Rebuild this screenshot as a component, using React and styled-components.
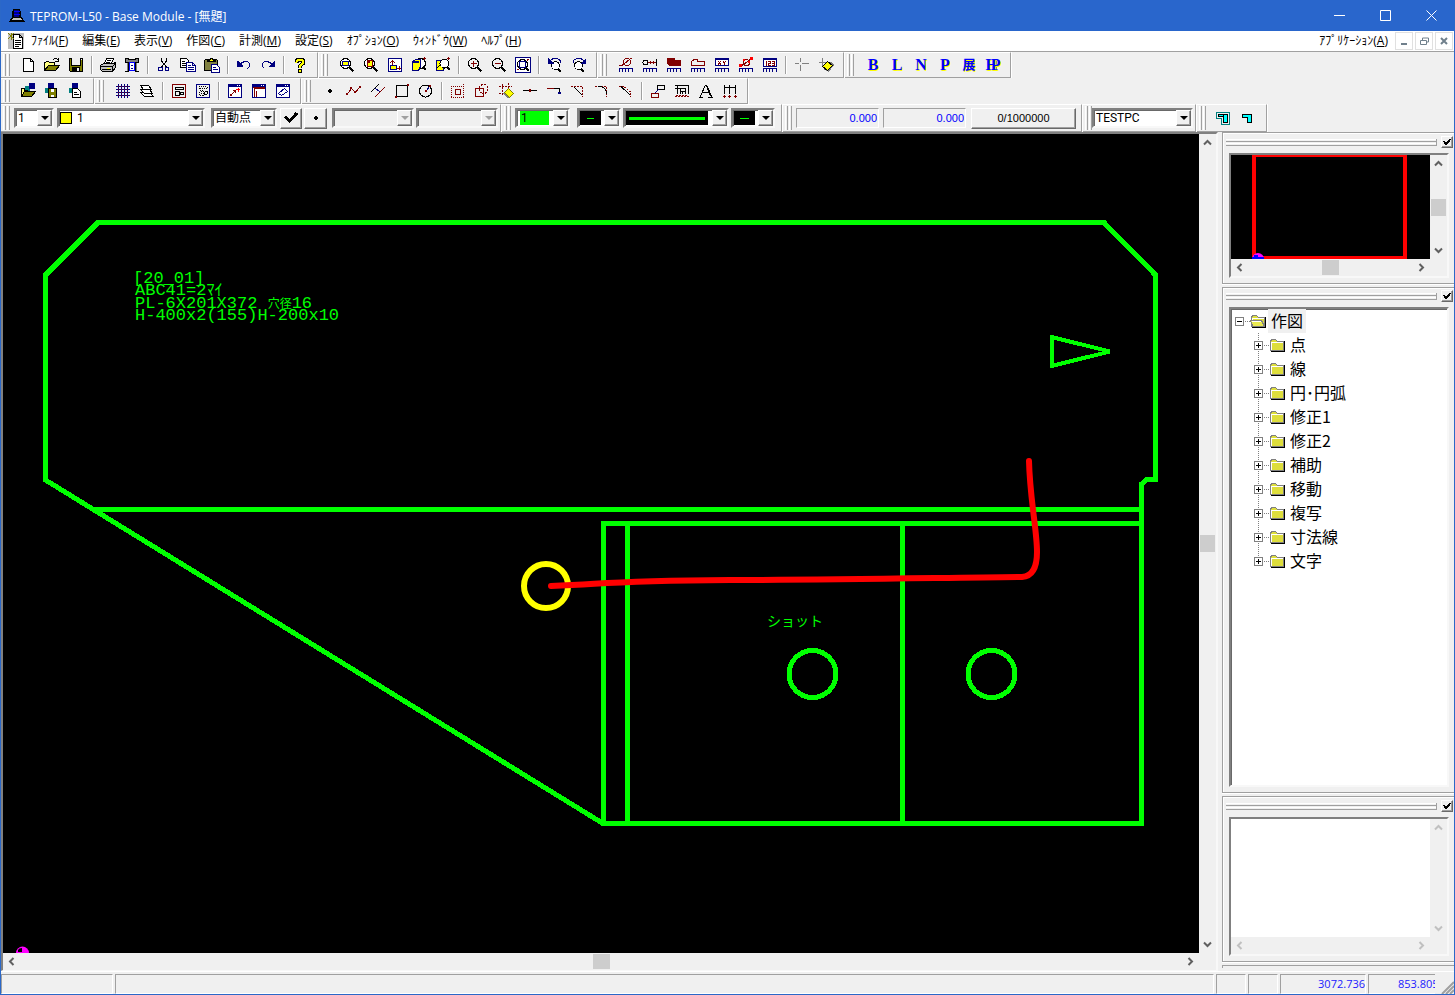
import React from "react";
import styled, {createGlobalStyle, css} from "styled-components";

const NAVY = "#000080";
const MAROON = "#800000";
const OLIVE = "#808000";
const TEAL = "#008080";
const YELLOW = "#ffff00";
const LIME = "#00ff00";

const GlobalStyle = createGlobalStyle`
  *, *::before, *::after {
    box-sizing: border-box;
  }
  body {
    margin: 0;
    background: #f0f0f0;
    font-family: "Open Sans", "Noto Sans CJK JP", sans-serif;
    font-size: 12px;
    color: #000;
  }
  button, select, input, textarea {
    font: inherit;
    color: inherit;
    margin: 0;
    padding: 0;
    border: 0;
    border-radius: 0;
    background: none;
  }
  ul {
    margin: 0;
    padding: 0;
    list-style: none;
  }
  svg {
    display: block;
  }
`;

const sunken = css`
  border: 2px solid;
  border-color: #808080 #f8f8f8 #f8f8f8 #808080;
  box-shadow: inset 1px 1px 0 #696969;
`;
const raised = css`
  border: 1px solid;
  border-color: #fff #696969 #696969 #fff;
  box-shadow: inset -1px -1px 0 #a0a0a0;
  background: #f0f0f0;
`;

/* ---------- icons ---------- */

const L = ({c = "#000", d, f = "none", w = 1, ...rest}) => (
  <path d={d} stroke={c} fill={f} strokeWidth={w} {...rest} />
);
const F = ({c = "#000", d}) => <path d={d} fill={c} />;

const Lens = ({c = "#f0f0f0"}) => (
  <>
    <circle cx="6.5" cy="6.5" r="5" stroke="#000" fill={c} />
    <L d="M10.5 10.5L14.5 14.5" w={2} />
  </>
);
const Comb = () => <L c={NAVY} d="M1.5 15V11.5H14.5V15M4.5 11V15M7.5 11V15M10.5 11V15" />;
const WindowBox = ({c = NAVY}) => (
  <>
    <L c={c} f="#fff" d="M1.5 1.5H14.5V14.5H1.5Z" />
    <F c={NAVY} d="M1 1H15V4H1Z" />
    <F c="#fff" d="M10 2H11V3H10ZM12 2H13V3H12Z" />
  </>
);

const icons = {
  new: (
    <L f="#fff" d="M3.5 1.5H10.5L13.5 4.5V14.5H3.5ZM10.5 1.5V4.5H13.5" />
  ),
  open: (
    <>
      <L f="#ffff80" d="M0.5 13.5V5.5H1.5L2.5 4.5H4.5L5.5 5.5H10.5V8" />
      <L f={OLIVE} d="M0.5 13.5L4.5 8.5H15.5L11.5 13.5Z" />
      <L d="M8.5 3.5Q9.5 1.5 11.5 1.5T14.5 4M14.5 1V4.5H11" />
    </>
  ),
  save: (
    <>
      <L f={OLIVE} d="M1.5 1.5H14.5V14.5H2.5L1.5 13.5Z" />
      <F c="#f0f0f0" d="M4 1H12V8H4Z" />
      <L d="M3.5 1V8.5H12.5V1" />
      <F d="M4 10H12V15H4Z" />
      <F c="#f0f0f0" d="M9 11H11V14H9ZM13 2H14V3H13Z" />
    </>
  ),
  print: (
    <>
      <L f="#fff" d="M4.5 6.5L6.5 1.5H13.5L11.5 6.5M6.5 3.5H11M6 5.5H10" />
      <L f="#c0c0c0" d="M0.5 8.5L3.5 6.5H13.5L15.5 5.5V10.5L12.5 14.5H2.5L0.5 12.5ZM0.5 9.5H12.5V14.5M12.5 9.5L15.5 6.5" />
      <F c={YELLOW} d="M7 11H10V12H7Z" />
      <L d="M2 12.5H11" />
    </>
  ),
  plot: (
    <>
      <F d="M1 1H5V2H11V1H15V6H12V14H15V15H11V13H5V15H1V14H4V6H1Z" />
      <F c="#808080" d="M2 2H4V3H12V2H14V5H2ZM3 6H4V14H3ZM12 6H13V14H12Z" />
      <L c="#0000ff" f="#fff" d="M5.5 5.5H10.5V13.5H5.5Z" />
      <L c={NAVY} d="M7 8.5H9M7 11.5H9" />
    </>
  ),
  cut: (
    <>
      <L d="M5.5 1V4L10.5 10M10.5 1V4L5.5 10" />
      <circle cx="4.5" cy="12" r="2" stroke={NAVY} fill="none" />
      <circle cx="11" cy="12" r="2" stroke={NAVY} fill="none" />
    </>
  ),
  copy: (
    <>
      <L f="#fff" d="M0.5 1.5H6.5L8.5 3.5V10.5H0.5ZM2 4.5H5M2 6.5H6M2 8.5H6" />
      <L c={NAVY} f="#fff" d="M6.5 5.5H12.5L15.5 8.5V14.5H6.5ZM12.5 5.5V8.5H15.5M8 8.5H11M8 10.5H14M8 12.5H14" />
    </>
  ),
  paste: (
    <>
      <L f="#808040" d="M0.5 3.5L1.5 2.5H12.5L13.5 3.5V13.5H0.5Z" />
      <L f={YELLOW} d="M3.5 4.5V3.5H5.5L6.5 1.5H8.5L9.5 3.5H11.5V4.5Z" />
      <L c={NAVY} f="#fff" d="M7.5 7.5H12.5L15.5 10.5V15.5H7.5ZM9 10.5H12M9 12.5H14" />
    </>
  ),
  undo: (
    <>
      <L c={NAVY} d="M3.5 7.5L6 5.5Q8 4.5 11 4.5Q13.5 5.5 13.5 8Q13.5 10 11.5 11.5" />
      <F c={NAVY} d="M1 4H2L7 9V10H1Z" />
    </>
  ),
  redo: (
    <>
      <L c={NAVY} d="M12.5 7.5L10 5.5Q8 4.5 5 4.5Q2.5 5.5 2.5 8Q2.5 10 4.5 11.5" />
      <F c={NAVY} d="M15 4H14L9 9V10H15Z" />
    </>
  ),
  help: (
    <>
      <L w={4} d="M4.5 6V5Q4.5 2.5 8 2.5T11.500 5Q11.500 6.5 9.5 7.5L8 9V11" />
      <L w={2} c={YELLOW} d="M4.5 5.500Q4.5 2.5 8 2.5T11.500 5Q11.500 6.5 9.5 7.5L8 9V10.5" />
      <L f={YELLOW} d="M6.5 12.5H9.5V15.5H6.5Z" />
    </>
  ),
  zoomRect: (
    <>
      <Lens c="#fff" />
      <L c={NAVY} f={YELLOW} d="M3.5 4.5H9.5V8.5H3.5Z" />
    </>
  ),
  zoomPage: (
    <>
      <Lens c="#fff" />
      <F c={MAROON} d="M4 3H10V10H4Z" />
      <F c={YELLOW} d="M7 4H9V9H5V6H7Z" />
    </>
  ),
  zoomMove: (
    <>
      <L c={NAVY} f="#fff" d="M1.5 1.5H14.5V14.5H1.5Z" />
      <L c={NAVY} f={YELLOW} d="M3.5 8.5H9.5V12.5H3.5Z" />
      <L c={MAROON} d="M5.5 3V8M3 5.5H4M4 4.5H7M7 5.5H8M10 11.5H14M12.5 9V13" />
    </>
  ),
  zoomBlock: (
    <>
      <circle cx="9.5" cy="6.5" r="5" stroke="#000" fill="#fff" />
      <L w={2} d="M12 10L15 13" />
      <L c={NAVY} f={YELLOW} d="M1.5 4.5L4.5 2.5H9.5V9.5L7.5 13.5H1.5Z" />
      <F c={NAVY} d="M1 4H8V6H1Z" />
      <L c={MAROON} d="M12 1.5H15M13.5 0V3" />
    </>
  ),
  zoomPart: (
    <>
      <L c={NAVY} f={YELLOW} d="M1.5 3.5H5.5V8.5H8.5V13.5H1.5Z" />
      <circle cx="9.5" cy="6.5" r="4.5" stroke="#000" fill="#fff" />
      <L w={2} d="M12 10L15 13" />
      <L d="M5 8L2 11" />
      <L c={MAROON} d="M12 1.5H15M13.5 0V3" />
    </>
  ),
  zoomIn: (
    <>
      <Lens />
      <L c={MAROON} d="M3.5 6.5H10M6.5 3.5V10" />
    </>
  ),
  zoomOut: (
    <>
      <Lens />
      <L c={MAROON} d="M3.5 6.5H10" />
    </>
  ),
  zoomAll: (
    <>
      <L c={NAVY} f="#fff" d="M0.5 0.5H15.5V15.5H0.5Z" />
      <circle cx="7.5" cy="7.5" r="5" stroke="#000" fill="#fff" />
      <L w={2} d="M11 11L14 14" />
      <L c={NAVY} d="M4.5 4.5H10.5V10.5H4.5Z" />
      <L c={MAROON} d="M12 2.5H14M12.5 2V4M2 12.5H4" />
    </>
  ),
  zoomPrev: (
    <>
      <circle cx="8.5" cy="8.5" r="4" stroke="#000" fill="#fff" />
      <L w={2} d="M11 12L14 15" />
      <L c={NAVY} d="M3 3.5Q8 -0.5 13.5 3.5V6" />
      <F c={NAVY} d="M1 1V7H7Z" />
    </>
  ),
  zoomNext: (
    <>
      <circle cx="7.5" cy="8.5" r="4" stroke="#000" fill="#fff" />
      <L w={2} d="M10 12L13 15" />
      <L c={NAVY} d="M13 3.5Q8 -0.5 2.5 3.5V6" />
      <F c={NAVY} d="M15 1V7H9Z" />
    </>
  ),
  measRadius: (
    <>
      <Comb />
      <circle cx="9" cy="5" r="3.5" stroke={MAROON} fill="none" />
      <L c={MAROON} d="M1 8.5H4L13.5 1" />
    </>
  ),
  measDist: (
    <>
      <Comb />
      <circle cx="3.5" cy="5.5" r="2.5" stroke="#000" fill="none" />
      <L c={MAROON} d="M6 5.5H14M8.5 4V7M11.5 4V7" />
      <L d="M14.5 2V9" />
    </>
  ),
  measFill: (
    <>
      <Comb />
      <L c={MAROON} f={MAROON} d="M1.5 1.5H8.5V3.5H14.5V8.5H3.5L1.5 6.5Z" />
    </>
  ),
  measShape: (
    <>
      <Comb />
      <L c={MAROON} d="M1.5 4.5L4 2.5H7.5V4.5H14.5V8.5H1.5Z" />
    </>
  ),
  measXY: (
    <>
      <Comb />
      <L c={NAVY} f="#fff" d="M1.5 1.5H14.5V8.5H1.5Z" />
      <F c={NAVY} d="M1 1H15V3H1Z" />
      <L c={MAROON} d="M4 4L7 7.5M7 4L4 7.5M9 4L10.5 6L12 4M10.5 6V8" />
    </>
  ),
  measPick: (
    <>
      <Comb />
      <circle cx="8.5" cy="5.5" r="3" stroke={MAROON} fill="none" />
      <L c={MAROON} d="M1 8.5H4L13.5 1.5" />
      <F c="#ff0000" d="M1 7H4V10H1ZM5 2H7V4H5ZM12 0H15V3H12ZM10 4H12V6H10Z" />
    </>
  ),
  measNum: (
    <>
      <Comb />
      <L c={NAVY} f="#fff" d="M1.5 1.5H14.5V9.5H1.5Z" />
      <F c={NAVY} d="M1 1H15V3H1Z" />
      <L c={MAROON} d="M4.5 4V9M6 4.5H8.5V6.5H6.5V8.5H9M10 4.5H12.5V8.5H10M10 6.5H12" />
    </>
  ),
  cross: <L c="#808080" d="M1 6.5H5M8 6.5H15M6.5 1V5M6.5 8V14" />,
  erasePoint: (
    <>
      <L c="#808080" d="M1 5.5H9M4.5 1V9" />
      <F c="#808080" d="M5 12L11 15L16 8L13 5Z" />
      <L f={YELLOW} d="M4.5 9.5L9.5 4.5L14.5 8.5L9.5 13.5Z" />
    </>
  ),
  layOpen: (
    <>
      <F c={TEAL} d="M5 3H10V8H5Z" />
      <F c={NAVY} d="M9 0H15V6H9Z" />
      <L f="#ffff80" d="M1.5 13.5V5.5H4.5V7.5H8" />
      <L f={OLIVE} d="M1.5 13.5L4.5 8.5H15.5L11.5 13.5Z" />
    </>
  ),
  laySave: (
    <>
      <F c={TEAL} d="M1 5H6V10H1Z" />
      <F c={NAVY} d="M4 0H10V6H4Z" />
      <L f={OLIVE} d="M4.5 5.5H12.5V14.5H4.5Z" />
      <F c="#fff" d="M7 6H10V9H7ZM7 12H10V14H7Z" />
    </>
  ),
  layPage: (
    <>
      <F c={TEAL} d="M1 5H6V10H1Z" />
      <F c={NAVY} d="M4 0H10V6H4Z" />
      <L f="#fff" d="M4.5 5.5H9.5L12.5 8.5V14.5H4.5ZM6 9.5H9M6 11.5H11" />
    </>
  ),
  grid: (
    <>
      <L c={NAVY} d="M1 3.5H15M1 6.5H15M1 9.5H15M1 12.5H15M3.5 1V15M6.5 1V15M9.5 1V15M12.5 1V15" />
      <L c={MAROON} strokeDasharray="1 2" d="M3 3.5H15M3 6.5H15M3 9.5H15M3 12.5H15" />
    </>
  ),
  layers: (
    <>
      <L f="#fff" d="M5.5 9.5H10.5L14.5 13.5H5.5L1.5 9.5Z" />
      <L f="#fff" d="M5.5 6.5H10.5L13.5 10.5H5.5L1.500 6.5Z" />
      <L f="#fff" d="M1.5 2.5H9.5L12.5 6.5H4.5Z" />
    </>
  ),
  blockMaroon: (
    <>
      <L c={MAROON} d="M1.5 1.5H14.5V14.5H1.5Z" />
      <L d="M4 4.5H12V6.5H4ZM4.5 8.5H8.5V12.5H4.5Z" />
      <circle cx="11" cy="10.5" r="1.5" stroke="#000" fill="none" />
    </>
  ),
  blockNavy: (
    <>
      <L c={NAVY} d="M1.5 1.5H14.5V14.5H1.5Z" />
      <L strokeDasharray="1 1" d="M4 3.5H12V5.5H4ZM4.5 7.5H8.5V12.5H4.5ZM6.5 8V12" />
      <circle cx="11" cy="10" r="1.5" stroke="#000" fill="none" />
    </>
  ),
  winScale: (
    <>
      <WindowBox />
      <L c={MAROON} d="M3.5 12.5L9 7" />
      <F c={MAROON} d="M3 11H5V13H3ZM6 7H9V10H8V8H6Z" />
      <L c="#ff0000" d="M9 6.5H13M11.5 5V9" />
    </>
  ),
  winFrame: (
    <>
      <WindowBox />
      <L c={MAROON} d="M3.5 14V5.5H14M5.5 14V7.5M2 4.500H14" />
    </>
  ),
  winSlant: (
    <>
      <WindowBox />
      <L c={NAVY} d="M3.5 10.5L9.5 5.5L12.5 8.5L6.5 12.5Z" />
    </>
  ),
  point: <F d="M7 6H9V7H10V9H9V10H7V9H6V7H7Z" />,
  polyline: (
    <>
      <L c={MAROON} d="M1.5 11L5.5 5.5L9.5 9.5L14 3.5" />
      <F c={MAROON} d="M0 10H2V12H0ZM4 4H6V6H4ZM8 8H10V10H8ZM13 3H15V5H13Z" />
    </>
  ),
  parallel: (
    <>
      <L d="M1 9L9 1" />
      <L c={MAROON} d="M5 14L15 4" />
      <L c={NAVY} d="M5 5L10 9" />
    </>
  ),
  rect: (
    <>
      <L d="M2.5 2.5H13.5V13.5H2.5Z" />
      <F c={MAROON} d="M1 13H3V15H1ZM13 1H15V3H13Z" />
    </>
  ),
  circle: (
    <>
      <circle cx="7.5" cy="8" r="6" stroke="#000" fill="none" />
      <L c={NAVY} d="M8 8L12 3" />
      <F c={MAROON} d="M7 7H9V9H7ZM11 2H13V4H11Z" />
    </>
  ),
  dotRect: (
    <>
      <L c={MAROON} strokeDasharray="1 1" d="M1 3.5H13M1.5 3V15M13.5 1V15M1 14.5H14" />
      <circle cx="8" cy="9" r="3" stroke={MAROON} fill="none" />
    </>
  ),
  union: (
    <>
      <L c={MAROON} d="M1.5 5.5H9.5V13.5H1.5Z" />
      <circle cx="9.5" cy="6" r="4.5" stroke={MAROON} fill="none" strokeDasharray="2 1" />
    </>
  ),
  erase: (
    <>
      <L c={MAROON} strokeDasharray="2 1" d="M1 3.5H14M4.5 1V13M10.5 0V5M1 10.5H6" />
      <F c="#808080" d="M5 10L9 15H12L8 8Z" />
      <L c={OLIVE} f={YELLOW} d="M6.5 9.5L10.5 5.5L15.5 10.5L11.5 14.5Z" />
    </>
  ),
  extend: (
    <>
      <L d="M1 7.5H15" />
      <F c={MAROON} d="M7 6H9V9H7Z" />
    </>
  ),
  corner: (
    <>
      <L c={MAROON} d="M1 5.5H13.5" />
      <L d="M8 5.5H13.5V11" />
      <F c={NAVY} d="M12 9H15V11H12Z" />
    </>
  ),
  chamfer: (
    <>
      <L c={MAROON} strokeDasharray="2 1" d="M1 3.5H12.5V14" />
      <L d="M4 4L12 12" />
    </>
  ),
  fillet: (
    <>
      <L c={MAROON} strokeDasharray="2 1" d="M1 3.5H12.5V14" />
      <L d="M4 3.5Q12.5 3.5 12.5 11" />
    </>
  ),
  chamferIn: (
    <>
      <L c={MAROON} strokeDasharray="2 1" d="M1 3.5H6L12.5 9V14" />
      <L d="M3 3.5L12 12" />
    </>
  ),
  moveBox: (
    <>
      <L d="M7.5 2.5H14.5V6.5H7.5Z" />
      <L c={MAROON} d="M1.5 10.5H8.5V14.5H1.5Z" />
      <L c={NAVY} d="M5 10L9 6" />
    </>
  ),
  dims: (
    <>
      <L d="M1 2.5H14.5V11M1 5.5H11.5V11M3.5 2V11M6.5 5V11M8.5 8V11M7 8.5H11" />
      <L c={MAROON} strokeDasharray="2 1" d="M1 13.5H15M2 12.5H14" />
    </>
  ),
  text: <L d="M2.5 14V13L7.5 2H8.5L13.5 13V14M4 9.5H11M1 14.5H5M10 14.5H15M8.500 3L12.500 13" />,
  dimLine: (
    <>
      <L d="M2.5 2V11M7.5 2V11M13.5 2V11M2 4.5H14" />
      <L c={MAROON} d="M1 13.5H4M6 13.5H9M12 13.5H15M2.5 12V15M7.5 12V15M13.5 12V15" />
    </>
  ),
  check: <L w={3} d="M2.5 6.5L6.5 11L14 3" />,
  flagBig: (
    <>
      <L c={TEAL} d="M1.5 2.5H14.5V14.5H6.5V8.5H1.5Z" />
      <F d="M3 4H13V13H8V7H3Z" />
      <F c="#00ffff" d="M4 5H8V6H4ZM9 5H12V12H9Z" />
    </>
  ),
  flag: (
    <>
      <F d="M3 4H13V13H8V8H3Z" />
      <F c="#00ffff" d="M4 5H8V7H4ZM8 5H12V12H9V7H8Z" />
    </>
  ),
  document: (
    <>
      <F c="#c0c0c0" d="M0 0H16V16H0Z" />
      <L f="#fff" d="M5.5 1.5H11.5L14.5 4.5V15.5H5.5ZM11.5 1.5V4.5H14.5M7 7.5H13M7 9.5H13M7 11.5H13M7 13.5H11" />
      <L c={OLIVE} d="M0 0L6 6M6 0L0 6M3.5 0V7" />
    </>
  ),
  app: (
    <>
      <F d="M4 1H11V3H12V9H13L16 14H0L3 9V3H4Z" />
      <F c={NAVY} d="M5 2H10V9H5Z" />
      <F c="#c0c0c0" d="M4 10H12L13 12H3Z" />
      <L c="#0000ff" d="M5 3.5H11M5 6.5H11" />
    </>
  )
};

const Icon = ({name, size = 16}) => (
  <svg width={size} height={size} viewBox="0 0 16 16" shapeRendering="crispEdges" aria-hidden="true">
    {icons[name]}
  </svg>
);

const CaretIcon = ({dir, color = "#606060"}) => (
  <svg width="9" height="9" viewBox="0 0 9 9" aria-hidden="true">
    <g transform={`rotate(${{up: 0, right: 90, down: 180, left: 270}[dir]} 4.5 4.5)`}>
      <path d="M1 6.5L4.5 3L8 6.5" fill="none" stroke={color} strokeWidth="2" />
    </g>
  </svg>
);

/* ---------- window chrome ---------- */

const Frame = styled.div`
  display: flex;
  flex-direction: column;
  height: 100vh;
  background: #f0f0f0;
  border: solid #2b68c8;
  border-width: 0 1px 1px;
`;
const TitleBar = styled.header`
  display: flex;
  align-items: center;
  flex: 0 0 31px;
  padding-left: 8px;
  gap: 5px;
  background: #2966cc;
  color: #fff;
`;
const Title = styled.h1`
  flex: 1;
  margin: 0;
  font-size: 12px;
  font-weight: 400;
`;
const CaptionButtons = styled.div`
  display: flex;
`;
const CaptionButton = styled.button`
  display: grid;
  place-items: center;
  width: 46px;
  height: 30px;
`;
const MenuBar = styled.nav`
  display: flex;
  align-items: center;
  flex: 0 0 21px;
  padding: 0 1px 0 7px;
  background: #fff;
  border-bottom: 1px solid #a0a0a0;
`;
const MenuItem = styled.button`
  padding: 0 7px;
  line-height: 18px;
  white-space: nowrap;
  &:last-of-type {
    margin-left: auto;
  }
`;
const ChildButtons = styled.div`
  display: flex;
  gap: 2px;
  button {
    display: grid;
    place-items: center;
    width: 18px;
    height: 18px;
    border: 1px solid #e0e0e0;
  }
`;

/* ---------- toolbars ---------- */

const ToolRow = styled.div`
  display: flex;
  flex: 0 0 ${p => p.$height || 26}px;
`;
const Bar = styled.div`
  display: flex;
  align-items: center;
  padding-right: ${p => p.$tail || 5}px;
  border: solid;
  border-width: 1px 1px 1px 0;
  border-color: #fff #a0a0a0 #a0a0a0;
  box-shadow: 1px 0 0 #fff;
  margin-right: 1px;
  &:first-child > :first-child {
    flex-basis: ${p => (p.$lead || 16) - 1}px;
  }
`;
const Grip = styled.span`
  flex: 0 0 ${p => p.$lead || 16}px;
  align-self: stretch;
  padding: 1px 0 1px 2px;
  display: flex;
  gap: 1px;
  &::before,
  &::after {
    content: "";
    width: 3px;
    border: solid;
    border-width: 0 1px;
    border-color: #fff #a0a0a0 #a0a0a0 #fff;
  }
`;
const ToolButton = styled.button`
  display: grid;
  place-items: center;
  width: 24px;
  height: 22px;
`;
const Separator = styled.span`
  width: 8px;
  height: 18px;
  background: linear-gradient(#a0a0a0, #a0a0a0) 3px 0 / 1px 100% no-repeat,
    linear-gradient(#fff, #fff) 4px 0 / 1px 100% no-repeat;
`;
const Letter = styled.span`
  display: flex;
  font: bold ${p => (p.$small ? 13 : 16)}px/20px "Liberation Serif", "Noto Sans CJK JP", serif;
  color: #0000ff;
  text-shadow: 1px 1px 0 ${YELLOW};
  span + span {
    margin-left: -7px;
  }
`;

const Toolbar = ({lead, tail, label, children}) => (
  <Bar role="toolbar" aria-label={label} $lead={lead} $tail={tail}>
    <Grip $lead={lead} />
    {children}
  </Bar>
);

const Tools = ({names}) =>
  names.split(" ").map((name, i) =>
    name === "|" ? (
      <Separator key={i} />
    ) : (
      <ToolButton key={i} aria-label={name}>
        <Icon name={name} />
      </ToolButton>
    )
  );

const ComboBox = styled.div`
  ${sunken}
  display: grid;
  width: ${p => p.$width}px;
  height: 20px;
  margin-left: ${p => p.$gap || 0}px;
  background: ${p => (p.$disabled ? "#f0f0f0" : "#fff")};
  font: 12px Roboto, "Noto Sans CJK JP", sans-serif;
  > * {
    grid-area: 1 / 1;
    min-width: 0;
  }
  select {
    appearance: none;
    width: 100%;
    height: 16px;
    padding-left: ${p => p.$indent || 2}px;
    line-height: 16px;
  }
`;
const ComboArrow = styled.span`
  ${raised}
  justify-self: end;
  display: grid;
  place-items: center;
  width: 15px;
  height: 16px;
  pointer-events: none;
  color: ${p => (p.$disabled ? "#a0a0a0" : "#000")};
  &::before {
    content: "";
    border: solid transparent;
    border-width: 4px 4px 0;
    border-top-color: currentColor;
  }
`;
const Swatch = styled.span`
  align-self: center;
  display: grid;
  align-items: center;
  width: ${p => p.$width}px;
  height: ${p => p.$height || 14}px;
  margin-left: ${p => p.$inset || 1}px;
  background: ${p => p.$color};
  border: ${p => (p.$outlined ? "1px solid #000" : "0")};
`;
const Stroke = styled.span`
  height: ${p => p.$weight}px;
  margin: 0 ${p => p.$inset}px;
  background: ${LIME};
`;

const Combo = ({label, value, width, gap, indent, disabled, children}) => (
  <ComboBox $width={width} $gap={gap} $indent={indent} $disabled={disabled}>
    {children}
    <select aria-label={label} disabled={disabled}>
      <option>{value}</option>
    </select>
    <ComboArrow $disabled={disabled} />
  </ComboBox>
);

const PushButton = styled.button`
  ${raised}
  display: grid;
  place-items: center;
  width: ${p => p.$width}px;
  height: 21px;
  margin-left: ${p => p.$gap || 0}px;
  font: 11px "Liberation Sans", sans-serif;
`;
const Readout = styled.input`
  width: 83px;
  height: 20px;
  margin-right: 4px;
  padding-right: 1px;
  border: 1px solid;
  border-color: #a0a0a0 #fff #fff #a0a0a0;
  font: 11px "Liberation Sans", sans-serif;
  color: #0000ff;
  text-align: right;
`;

/* ---------- scroll bars ---------- */

const Track = styled.div`
  display: flex;
  flex-direction: ${p => (p.$vertical ? "column" : "row")};
  align-items: center;
  justify-content: space-between;
  background: #f0f0f0;
  min-width: 0;
  min-height: 0;
  button {
    display: grid;
    place-items: center;
    width: 17px;
    height: 17px;
  }
`;
const Thumb = styled.span`
  width: ${p => (p.$vertical ? 15 : 17)}px;
  height: ${p => (p.$vertical ? 17 : 15)}px;
  background: #cdcdcd;
`;

const ScrollBar = ({vertical, disabled}) => {
  const color = disabled ? "#c0c0c0" : "#606060";
  return (
    <Track $vertical={vertical}>
      <button aria-label={vertical ? "up" : "left"}>
        <CaretIcon dir={vertical ? "up" : "left"} color={color} />
      </button>
      {!disabled && <Thumb $vertical={vertical} />}
      <button aria-label={vertical ? "down" : "right"}>
        <CaretIcon dir={vertical ? "down" : "right"} color={color} />
      </button>
    </Track>
  );
};

const Scroller = styled.div`
  display: grid;
  grid-template: minmax(0, 1fr) 17px / minmax(0, 1fr) 17px;
  min-height: 0;
  ${sunken}
  border-bottom-width: ${p => (p.$flush ? 1 : 2)}px;
  > svg {
    width: 100%;
    height: 100%;
    background: #000;
  }
`;

/* ---------- main area ---------- */

const Main = styled.main`
  display: grid;
  grid-template-columns: minmax(0, 1fr) 232px;
  gap: 4px;
  flex: 1;
  min-height: 0;
`;
const Side = styled.aside`
  display: flex;
  flex-direction: column;
  gap: 3px;
  min-height: 0;
  padding-bottom: 3px;
`;
const Dock = styled.section`
  display: flex;
  flex-direction: column;
  flex: ${p => (p.$height ? `0 0 ${p.$height}px` : "1")};
  min-height: 0;
  padding: 0 5px 5px 6px;
  border: solid #a0a0a0;
  border-width: 1px 0 1px 1px;
  box-shadow: inset 1px 1px 0 #fff, 0 1px 0 #fff;
  > :last-child {
    flex: 1;
  }
`;
const DockEdge = styled.div`
  height: 3px;
  border: solid #a0a0a0;
  border-width: 1px 0 0 1px;
`;
const DockHeader = styled.div`
  display: flex;
  align-items: center;
  gap: 4px;
  flex: 0 0 ${p => p.$height}px;
  margin: 0 -4px 0 -3px;
  button {
    ${raised}
    display: grid;
    place-items: center;
    width: 12px;
    height: 12px;
    margin-bottom: 3px;
  }
`;
const Ridges = styled.span`
  flex: 1;
  height: 7px;
  margin-bottom: 2px;
  background: linear-gradient(
    #fff 0 1px,
    #f0f0f0 1px 2px,
    #a0a0a0 2px 3px,
    #f0f0f0 3px 4px,
    #fff 4px 5px,
    #f0f0f0 5px 6px,
    #a0a0a0 6px 7px
  );
  border-right: 1px solid #a0a0a0;
`;
const Notes = styled.textarea`
  resize: none;
  background: #fff;
  outline: 0;
`;

const DockPanel = ({height, header = 20, label, children}) => (
  <Dock $height={height} aria-label={label}>
    <DockHeader $height={header}>
      <Ridges />
      <button aria-label={`${label} toggle`}>
        <Icon name="check" size={10} />
      </button>
    </DockHeader>
    {children}
  </Dock>
);

/* ---------- tree ---------- */

const TreeBox = styled.div`
  ${sunken}
  background: #fff;
  overflow: hidden;
  font: 16px/24px "Noto Sans CJK JP", sans-serif;
`;
const Node = styled.li`
  display: flex;
  align-items: center;
  height: 24px;
  padding-left: ${p => (p.$root ? 4 : 23)}px;
`;
const ToggleCell = styled.span`
  display: grid;
  place-items: center;
  width: 9px;
  height: 24px;
  background: ${p =>
    p.$root
      ? "none"
      : "repeating-linear-gradient(#808080 0 1px, #fff 1px 2px) 4px 0 / 1px 100% no-repeat"};
  ${Node}:last-child > & {
    background-size: 1px 12px;
  }
`;
const Toggle = styled.button`
  width: 9px;
  height: 9px;
  border: 1px solid #808080;
  background: linear-gradient(#000, #000) 1px 3px / 5px 1px no-repeat,
    linear-gradient(#000, #000) 3px 1px / 1px ${p => (p.$open ? 0 : 5)}px no-repeat, #fff;
`;
const Dots = styled.span`
  width: 6px;
  height: 1px;
  background: repeating-linear-gradient(90deg, #fff 0 1px, #808080 1px 2px);
`;
const NodeLabel = styled.span`
  margin-left: 2px;
  padding: 0 3px;
  /* sits a little high on the line, as the system font does */
  line-height: 22px;
  padding-bottom: 2px;
  background: ${p => (p.$selected ? "#f0f0f0" : "none")};
`;

const FolderIcon = ({open}) => (
  <svg width="16" height="16" viewBox="0 0 16 16" shapeRendering="crispEdges" aria-hidden="true">
    <L d="M2 14.5H15.5V4" />
    <L c="#808080" f="#dede3c" d="M1.5 13.5V4.5L2.5 2.5H6.5L8.5 4.5H14.5V13.5Z" />
    <L c="#fff" d="M2.5 13V5.5H14" />
    {open && <L c="#808080" f="#eaea50" d="M3 13.5L0.5 7.5H11.5L14.5 13.5Z" />}
    {open && <L c="#fff" d="M2 8.5H11" />}
  </svg>
);

const TreeNode = ({label, root}) => (
  <Node $root={root}>
    <ToggleCell $root={root}>
      <Toggle $open={root} aria-label={label} />
    </ToggleCell>
    <Dots />
    <FolderIcon open={root} />
    <NodeLabel $selected={root}>{label}</NodeLabel>
  </Node>
);

const branches = ["点", "線", "円･円弧", "修正1", "修正2", "補助", "移動", "複写", "寸法線", "文字"];

/* ---------- drawing ---------- */

const DrawingText = styled.text`
  fill: ${LIME};
  font-family: "Liberation Mono", "Noto Sans CJK JP", monospace;
  font-size: ${p => p.$size || 17}px;
  white-space: pre;
`;

const Drawing = () => (
  <svg viewBox="3 134 1196 819" preserveAspectRatio="xMinYMin meet" role="img" aria-label="drawing">
    <g stroke={LIME} strokeWidth="5" fill="none" shapeRendering="crispEdges">
      <path d="M98 222.5H1104L1155.5 275V479.5H1147L1141.5 484V823.5H603L45.5 480V275Z" />
      <path d="M95 509.5H1141M603.5 823V523.5H1141M627.5 523V823M902.5 523V823" />
      <path d="M1051.500 337L1110 351.500L1051.500 366Z" strokeWidth="4" />
      <circle cx="812.5" cy="674" r="23.5" />
      <circle cx="991.5" cy="674" r="23.5" />
    </g>
    <DrawingText x="133" y="283">[20_01]</DrawingText>
    <DrawingText x="135" y="295">
      ABC41=2<tspan fontSize="16">ﾏｲ</tspan>
    </DrawingText>
    <DrawingText x="135" y="308">
      PL-6X201X372 <tspan fontSize="12">穴径</tspan>16
    </DrawingText>
    <DrawingText x="135" y="320">H-400x2(155)H-200x10</DrawingText>
    <DrawingText x="767" y="626" $size={14}>ショット</DrawingText>
    <circle cx="546" cy="586" r="22" fill="none" stroke={YELLOW} strokeWidth="6" />
    <path
      d="M1029 461C1030 500 1037 530 1037 552Q1037 576 1022 577C930 578 830 580 730 580C600 581 610 584 551 586"
      fill="none"
      stroke="#ff0000"
      strokeWidth="6"
      strokeLinecap="round"
    />
    <path d="M16 953A6.500 6.500 0 0 1 29 953Z" fill="#ff00ff" />
    <path d="M18 952V950Q19 948 22 948V952Z" fill="#000" />
  </svg>
);

const Overview = () => (
  <svg viewBox="0 0 199 104" preserveAspectRatio="xMinYMin slice" role="img" aria-label="overview">
    <path d="M21 0H176V104H21ZM25 2V101H172V2Z" fill="#ff0000" fillRule="evenodd" />
    <path d="M21 104A6 6 0 0 1 33 104Z" fill="#ff00ff" />
    <path d="M27 102H33V104H21V102H23V100H27Z" fill="#0000ff" />
  </svg>
);

/* ---------- status bar ---------- */

const StatusBar = styled.footer`
  display: grid;
  grid-template-columns: 112px minmax(0, 1fr) 30px 30px 86px 67px 17px;
  gap: 2px;
  flex: 0 0 23px;
  padding: 2px 0 0;
  border-top: 1px solid #fff;
`;
const StatusCell = styled.div`
  border: 1px solid;
  border-color: #a0a0a0 #fff #fff #a0a0a0;
  border-right-width: ${p => (p.$cut ? 0 : 1)}px;
  font-size: 11px;
  line-height: 18px;
  color: #2020ff;
  text-align: ${p => (p.$cut ? "left" : "right")};
  text-indent: ${p => (p.$cut ? 29 : 0)}px;
  white-space: nowrap;
  overflow: hidden;
`;
const SizeGrip = styled.svg`
  align-self: end;
  justify-self: end;
`;

const menus = [
  ["ﾌｧｲﾙ", "F"],
  ["編集", "E"],
  ["表示", "V"],
  ["作図", "C"],
  ["計測", "M"],
  ["設定", "S"],
  ["ｵﾌﾟｼｮﾝ", "O"],
  ["ｳｨﾝﾄﾞｳ", "W"],
  ["ﾍﾙﾌﾟ", "H"],
  ["ｱﾌﾟﾘｹｰｼｮﾝ", "A"]
];

const App = () => (
  <>
    <GlobalStyle />
    <Frame>
      <TitleBar>
        <Icon name="app" />
        <Title>TEPROM-L50 - Base Module - [無題]</Title>
        <CaptionButtons>
          <CaptionButton aria-label="minimize">
            <svg width="11" height="11"><path d="M0 5.500H11" stroke="#fff" /></svg>
          </CaptionButton>
          <CaptionButton aria-label="maximize">
            <svg width="11" height="11"><path d="M.5 .5H10.500V10.500H.5Z" stroke="#fff" fill="none" /></svg>
          </CaptionButton>
          <CaptionButton aria-label="close">
            <svg width="11" height="11"><path d="M.5 .5L10.500 10.500M10.500 .5L.5 10.500" stroke="#fff" /></svg>
          </CaptionButton>
        </CaptionButtons>
      </TitleBar>
      <MenuBar>
        <Icon name="document" />
        {menus.map(([text, key]) => (
          <MenuItem key={key}>
            {text}(<u>{key}</u>)
          </MenuItem>
        ))}
        <ChildButtons>
          <button aria-label="minimize document">
            <svg width="8" height="8"><path d="M1 7H7" stroke="#70808c" strokeWidth="2" /></svg>
          </button>
          <button aria-label="restore document">
            <svg width="9" height="8"><path d="M2.500 3V1H8.500V5H6.500M.5 3.500H6.500V7.500H.5Z" stroke="#70808c" fill="none" /></svg>
          </button>
          <button aria-label="close document">
            <svg width="8" height="8"><path d="M1 1L7 7M7 1L1 7" stroke="#70808c" strokeWidth="2" /></svg>
          </button>
        </ChildButtons>
      </MenuBar>

      <ToolRow>
        <Toolbar label="standard">
          <Tools names="new open save | print plot | cut copy paste | undo redo | help" />
        </Toolbar>
        <Toolbar label="zoom">
          <Tools names="zoomRect zoomPage zoomMove zoomBlock zoomPart | zoomIn zoomOut zoomAll | zoomPrev zoomNext" />
        </Toolbar>
        <Toolbar label="measure">
          <Tools names="measRadius measDist measFill measShape measXY measPick measNum | cross erasePoint" />
        </Toolbar>
        <Toolbar label="applications">
          {["B", "L", "N", "P"].map(letter => (
            <ToolButton key={letter}>
              <Letter>{letter}</Letter>
            </ToolButton>
          ))}
          <ToolButton>
            <Letter $small>展</Letter>
          </ToolButton>
          <ToolButton>
            <Letter>
              <span>H</span>
              <span>P</span>
            </Letter>
          </ToolButton>
        </Toolbar>
      </ToolRow>
      <ToolRow>
        <Toolbar label="layer files">
          <Tools names="layOpen laySave layPage" />
        </Toolbar>
        <Toolbar label="view">
          <Tools names="grid layers | blockMaroon blockNavy | winScale winFrame winSlant" />
        </Toolbar>
        <Toolbar label="draw">
          <Tools names="point polyline parallel rect circle | dotRect union erase extend corner chamfer fillet chamferIn | moveBox dims text dimLine" />
        </Toolbar>
      </ToolRow>
      <ToolRow $height={28}>
        <Toolbar label="input" lead={14} tail={2}>
          <Combo label="layer group" value="1" width={40} />
          <Combo label="layer" value="1" width={148} gap={3} indent={18}>
            <Swatch $width={12} $height={12} $color={YELLOW} $outlined />
          </Combo>
          <Combo label="snap" value="自動点" width={66} gap={6} />
          <PushButton $width={22} $gap={3} aria-label="apply">
            <Icon name="check" />
          </PushButton>
          <PushButton $width={23} $gap={2} aria-label="point">
            <Icon name="point" />
          </PushButton>
          <Combo label="parameter 1" width={82} gap={5} disabled />
          <Combo label="parameter 2" width={82} gap={2} disabled />
        </Toolbar>
        <Toolbar label="pen" lead={13} tail={6}>
          <Combo label="color" value="1" width={55} indent={4}>
            <Swatch $width={29} $inset={3} $color={LIME} />
          </Combo>
          <Combo label="line type" width={44} gap={7}>
            <Swatch $width={21} $color="#000">
              <Stroke $weight={1} $inset={7} />
            </Swatch>
          </Combo>
          <Combo label="line weight" width={106} gap={2}>
            <Swatch $width={82} $color="#000">
              <Stroke $weight={3} $inset={3} />
            </Swatch>
          </Combo>
          <Combo label="line end" width={44} gap={2}>
            <Swatch $width={21} $color="#000">
              <Stroke $weight={1} $inset={6} />
            </Swatch>
          </Combo>
        </Toolbar>
        <Toolbar label="coordinates" lead={13} tail={5}>
          <Readout aria-label="x" defaultValue="0.000" />
          <Readout aria-label="y" defaultValue="0.000" />
          <PushButton $width={105} $gap={1}>0/1000000</PushButton>
        </Toolbar>
        <Toolbar label="machine" lead={9} tail={2}>
          <Combo label="machine" value="TESTPC" width={101} />
        </Toolbar>
        <Toolbar label="flags" lead={14} tail={7}>
          <Tools names="flagBig flag" />
        </Toolbar>
      </ToolRow>

      <Main>
        <Scroller $flush>
          <Drawing />
          <ScrollBar vertical />
          <ScrollBar />
        </Scroller>
        <Side>
          <DockPanel height={152} label="overview panel">
            <Scroller>
              <Overview />
              <ScrollBar vertical />
              <ScrollBar />
            </Scroller>
          </DockPanel>
          <DockPanel header={19} label="command tree">
            <TreeBox>
              <ul>
                <TreeNode label="作図" root />
                {branches.map(label => (
                  <TreeNode key={label} label={label} />
                ))}
              </ul>
            </TreeBox>
          </DockPanel>
          <DockPanel height={166} label="messages">
            <Scroller>
              <Notes aria-label="messages" />
              <ScrollBar vertical disabled />
              <ScrollBar disabled />
            </Scroller>
          </DockPanel>
          <DockEdge />
        </Side>
      </Main>

      <StatusBar>
        <StatusCell />
        <StatusCell />
        <StatusCell />
        <StatusCell />
        <StatusCell>3072.736</StatusCell>
        <StatusCell $cut>853.805</StatusCell>
        <SizeGrip width="13" height="13" aria-hidden="true">
          <path d="M1 13L13 1M5 13L13 5M9 13L13 9" stroke="#a0a0a0" strokeWidth="2" />
        </SizeGrip>
      </StatusBar>
    </Frame>
  </>
);

export default App;
